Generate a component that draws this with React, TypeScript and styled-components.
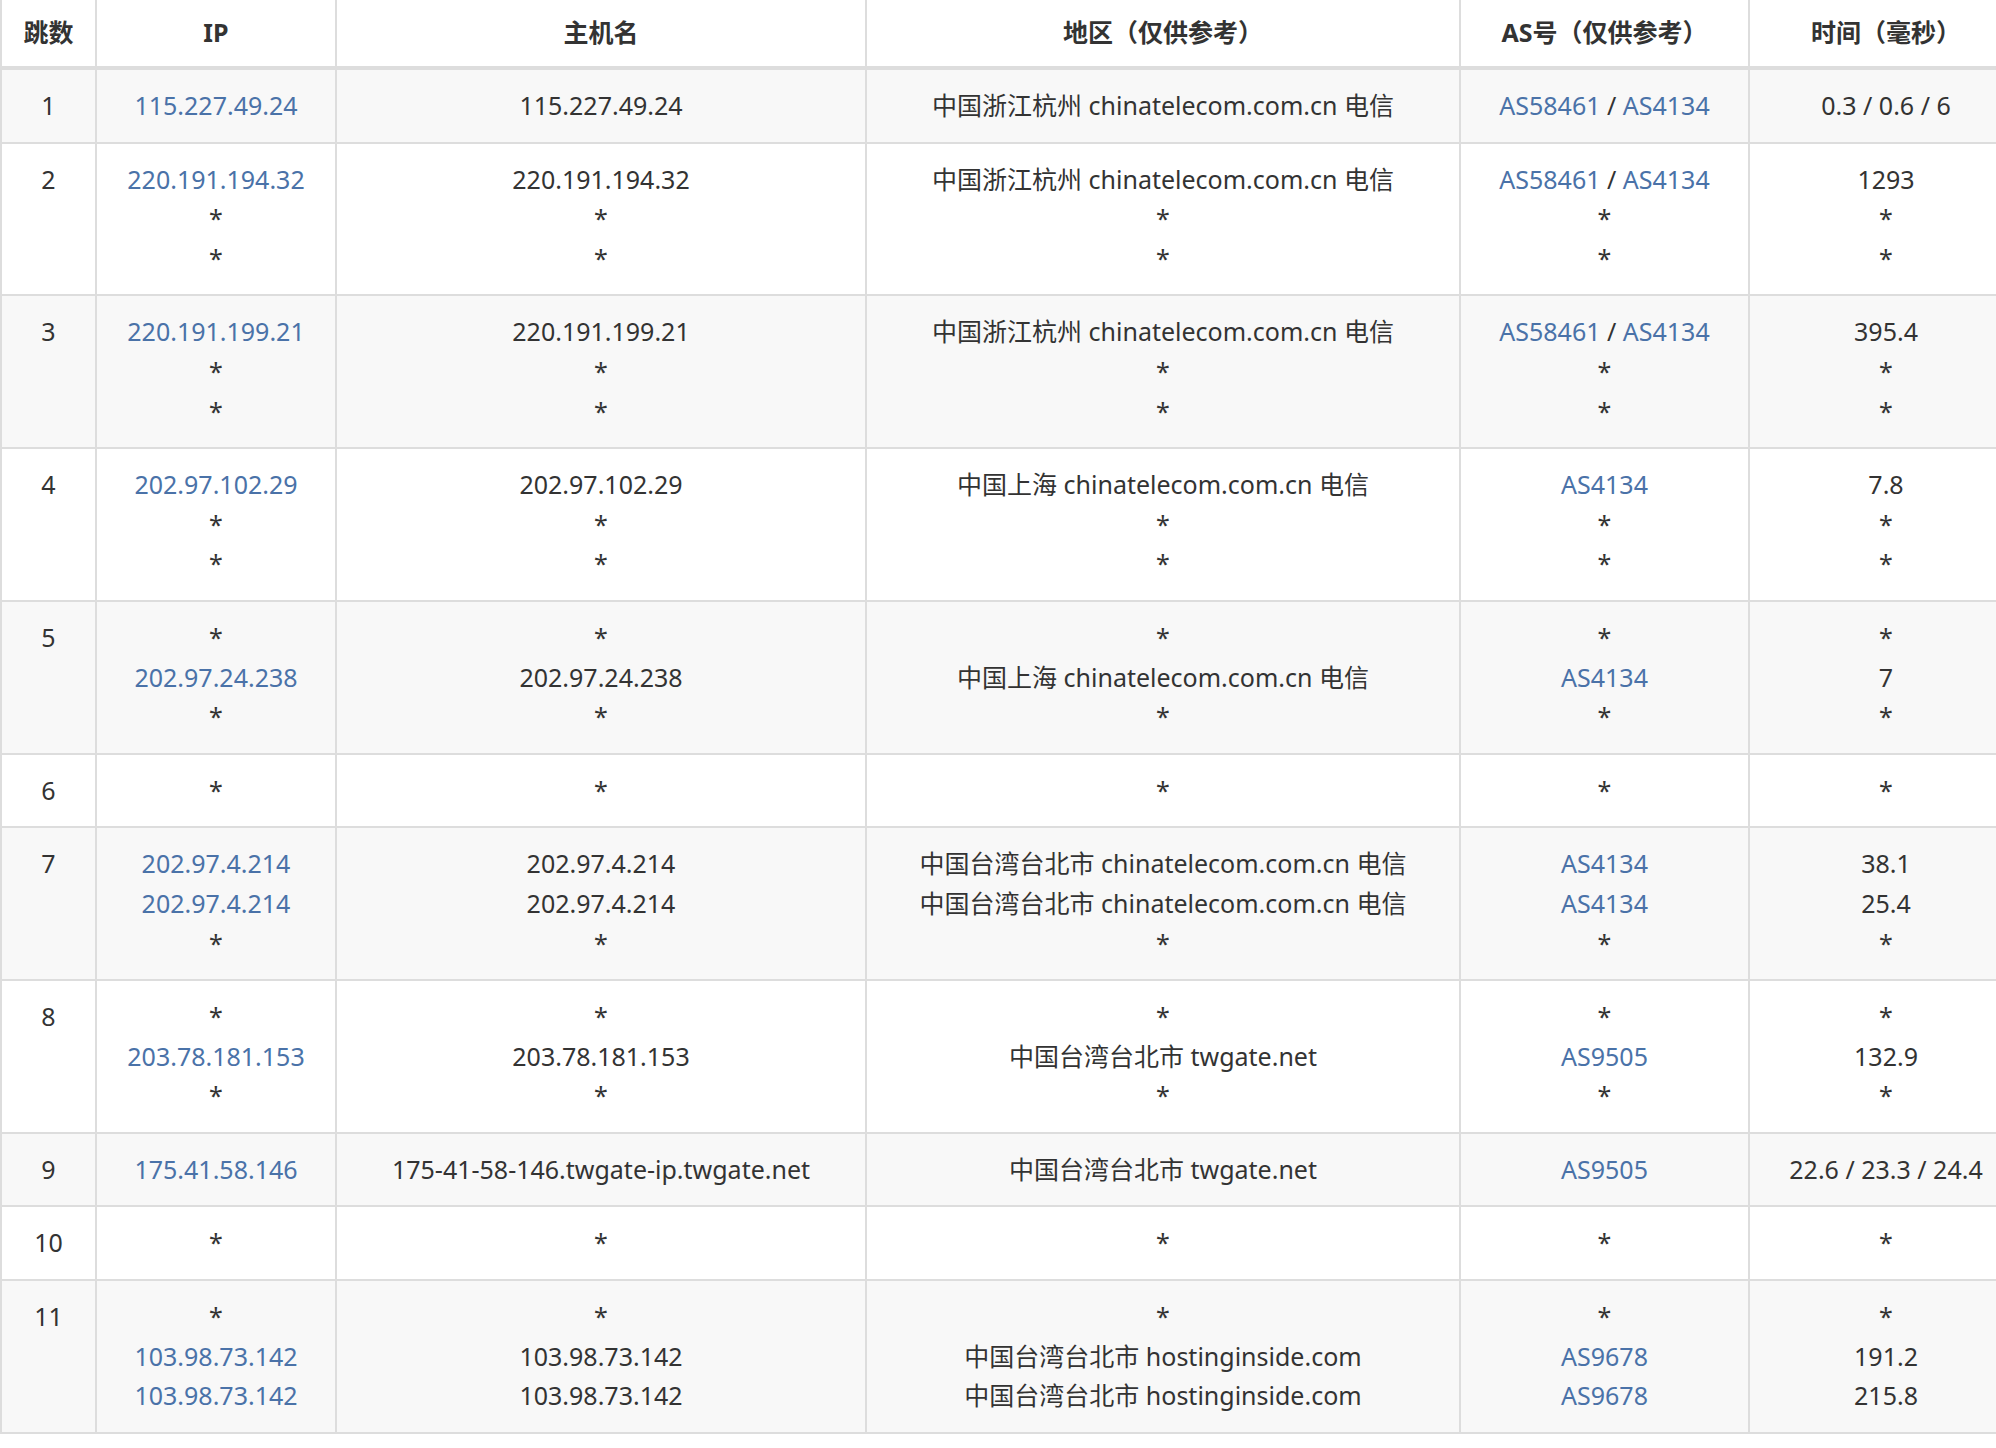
import React from 'react';
import styled, { createGlobalStyle } from 'styled-components';

const Global = createGlobalStyle`
    html, body { margin: 0; padding: 0; background: #fff; overflow: hidden; }
    body { font-family: "Noto Sans", "Noto Sans CJK SC", sans-serif; color: #333; }
`;

type Cell = string[];
type Hop = { hop: number; ip: Cell; host: Cell; area: Cell; as: Cell; time: Cell };

const S = '*';
const TEL_HZ = '中国浙江杭州 chinatelecom.com.cn 电信';
const TEL_SH = '中国上海 chinatelecom.com.cn 电信';
const TEL_TW = '中国台湾台北市 chinatelecom.com.cn 电信';
const AS2 = 'AS58461 / AS4134';

const hops: Hop[] = [
    { hop: 1, ip: ['115.227.49.24'], host: ['115.227.49.24'], area: [TEL_HZ], as: [AS2], time: ['0.3 / 0.6 / 6'] },
    { hop: 2, ip: ['220.191.194.32', S, S], host: ['220.191.194.32', S, S], area: [TEL_HZ, S, S], as: [AS2, S, S], time: ['1293', S, S] },
    { hop: 3, ip: ['220.191.199.21', S, S], host: ['220.191.199.21', S, S], area: [TEL_HZ, S, S], as: [AS2, S, S], time: ['395.4', S, S] },
    { hop: 4, ip: ['202.97.102.29', S, S], host: ['202.97.102.29', S, S], area: [TEL_SH, S, S], as: ['AS4134', S, S], time: ['7.8', S, S] },
    { hop: 5, ip: [S, '202.97.24.238', S], host: [S, '202.97.24.238', S], area: [S, TEL_SH, S], as: [S, 'AS4134', S], time: [S, '7', S] },
    { hop: 6, ip: [S], host: [S], area: [S], as: [S], time: [S] },
    { hop: 7, ip: ['202.97.4.214', '202.97.4.214', S], host: ['202.97.4.214', '202.97.4.214', S], area: [TEL_TW, TEL_TW, S], as: ['AS4134', 'AS4134', S], time: ['38.1', '25.4', S] },
    { hop: 8, ip: [S, '203.78.181.153', S], host: [S, '203.78.181.153', S], area: [S, '中国台湾台北市 twgate.net', S], as: [S, 'AS9505', S], time: [S, '132.9', S] },
    { hop: 9, ip: ['175.41.58.146'], host: ['175-41-58-146.twgate-ip.twgate.net'], area: ['中国台湾台北市 twgate.net'], as: ['AS9505'], time: ['22.6 / 23.3 / 24.4'] },
    { hop: 10, ip: [S], host: [S], area: [S], as: [S], time: [S] },
    { hop: 11, ip: [S, '103.98.73.142', '103.98.73.142'], host: [S, '103.98.73.142', '103.98.73.142'], area: [S, '中国台湾台北市 hostinginside.com', '中国台湾台北市 hostinginside.com'], as: [S, 'AS9678', 'AS9678'], time: [S, '191.2', '215.8'] },
];

const Table = styled.table`
    border-collapse: collapse;
    table-layout: fixed;
    width: 2010px;
    font-size: 25px;
    line-height: 39.6px;
`;

const Th = styled.th<{ $w: number }>`
    width: ${(p) => p.$w}px;
    height: 66px;
    padding: 0;
    border: 2px solid #ddd;
    border-top: none;
    border-bottom: 4px solid #ddd;
    font-weight: 700;
    text-align: center;
    vertical-align: middle;
`;

const Row = styled.tr<{ $odd: boolean }>`
    background: ${(p) => (p.$odd ? '#f8f8f8' : '#fff')};
`;

const Td = styled.td`
    border: 2px solid #ddd;
    padding: 16px 4px;
    text-align: center;
    vertical-align: top;
    white-space: nowrap;
`;

const Line = styled.div<{ $link?: boolean }>`
    color: ${(p) => (p.$link ? '#4a72a8' : '#333')};
`;

const Sep = styled.span`
    color: #333;
`;

const Link = styled.span`
    color: #4a72a8;
`;

const renderAs = (v: string) =>
    v === S ? (
        <Line>{v}</Line>
    ) : (
        <Line>
            {v.split(' / ').map((a, i) => (
                <React.Fragment key={i}>
                    {i > 0 && <Sep> / </Sep>}
                    <Link>{a}</Link>
                </React.Fragment>
            ))}
        </Line>
    );

const Lines = ({ values, link }: { values: Cell; link?: boolean }) => (
    <>
        {values.map((v, i) => (
            <Line key={i} $link={link && v !== S}>
                {v}
            </Line>
        ))}
    </>
);

const headers: [string, number][] = [
    ['跳数', 93],
    ['IP', 238],
    ['主机名', 528],
    ['地区（仅供参考）', 592],
    ['AS号（仅供参考）', 287],
    ['时间（毫秒）', 272],
];

export default function App() {
    return (
        <>
            <Global />
            <Table>
                <thead>
                    <tr>
                        {headers.map(([h, w]) => (
                            <Th key={h} $w={w}>
                                {h}
                            </Th>
                        ))}
                    </tr>
                </thead>
                <tbody>
                    {hops.map((h) => (
                        <Row key={h.hop} $odd={h.hop % 2 === 1}>
                            <Td>
                                <Line>{h.hop}</Line>
                            </Td>
                            <Td>
                                <Lines values={h.ip} link />
                            </Td>
                            <Td>
                                <Lines values={h.host} />
                            </Td>
                            <Td>
                                <Lines values={h.area} />
                            </Td>
                            <Td>{h.as.map((v, i) => <React.Fragment key={i}>{renderAs(v)}</React.Fragment>)}</Td>
                            <Td>
                                <Lines values={h.time} />
                            </Td>
                        </Row>
                    ))}
                </tbody>
            </Table>
        </>
    );
}
